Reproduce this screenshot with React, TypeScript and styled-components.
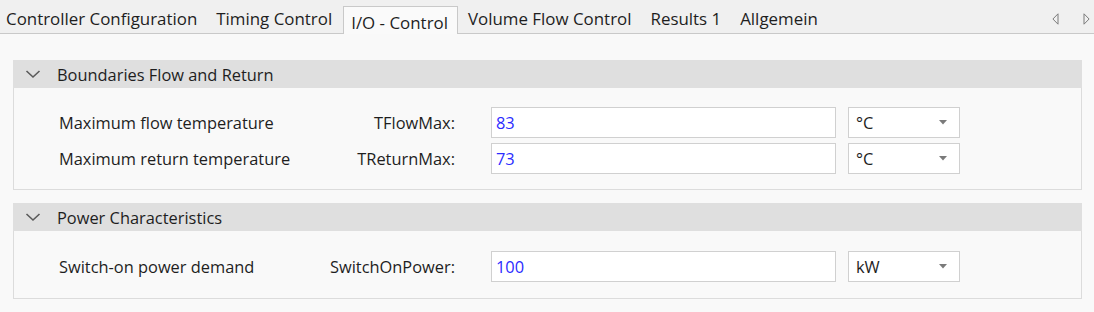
import React from "react";
import styled, { createGlobalStyle } from "styled-components";

const Global = createGlobalStyle`
  html, body { margin: 0; padding: 0; background: #f9f9f9; }
  body { font-family: "Open Sans", "Noto Sans", sans-serif; font-size: 16.4px; color: #1e1e1e; }
  * { box-sizing: border-box; }
`;

const Page = styled.div`
  width: 1094px;
  height: 312px;
  background: #f9f9f9;
  display: flex;
  flex-direction: column;
  overflow: hidden;
`;

const TabStrip = styled.div`
  height: 34px;
  background: #f0f0f0;
  border-bottom: 1px solid #c9c9c9;
  display: flex;
  align-items: flex-end;
`;

const Tab = styled.div<{ $active?: boolean }>`
  height: ${(p) => (p.$active ? "28px" : "33px")};
  padding: ${(p) => (p.$active ? "3px 9px 0 7px" : "4px 9px 0 10px")};
  margin-left: ${(p) => (p.$active ? "2px" : "0")};
  display: flex;
  align-items: center;
  white-space: nowrap;
  font-size: 16.9px;
  color: #1e1e1e;
  margin-bottom: ${(p) => (p.$active ? "-1px" : "0")};
  background: ${(p) => (p.$active ? "#fafafa" : "transparent")};
  border: ${(p) => (p.$active ? "1px solid #c9c9c9" : "none")};
  border-bottom: none;
  &:first-child { padding-left: 6px; }
`;

const Scrollers = styled.div`
  margin-left: auto;
  height: 33px;
  display: flex;
  align-items: center;
  gap: 24px;
  padding: 4px 4px 0 0;
`;

const Content = styled.div`
  padding: 26px 12px 0 13px;
  display: flex;
  flex-direction: column;
  gap: 13px;
`;

const Group = styled.section`
  border: 1px solid #dcdcdc;
  background: #f9f9f9;
`;

const GroupHeader = styled.div`
  height: 28px;
  margin: -1px -1px 0 -1px;
  background: #dfdfdf;
  display: flex;
  align-items: center;
  padding-left: 12px;
  gap: 16px;
  color: #1e1e1e;
`;

const GroupBody = styled.div<{ $top: number; $bottom: number }>`
  padding: ${(p) => p.$top}px 121px ${(p) => p.$bottom}px 45px;
  display: flex;
  flex-direction: column;
  gap: 5px;
`;

const Row = styled.div`
  display: flex;
  align-items: center;
  height: 31px;
`;

const Label = styled.div`
  flex: 1;
  white-space: nowrap;
`;

const Keyword = styled.div`
  white-space: nowrap;
  text-align: right;
`;

const ValueBox = styled.div`
  margin-left: 36px;
  width: 345px;
  height: 31px;
  background: #ffffff;
  border: 1px solid #d0d0d0;
  display: flex;
  align-items: center;
  padding-left: 4px;
  color: #2b2bff;
`;

const UnitSelect = styled.div`
  margin-left: 12px;
  width: 112px;
  height: 31px;
  background: #ffffff;
  border: 1px solid #d0d0d0;
  display: flex;
  align-items: center;
  padding: 0 12px 0 7px;
  justify-content: space-between;
  color: #1e1e1e;
`;

const Chevron = () => (
  <svg width="16" height="10" viewBox="0 0 16 10">
    <path d="M1.5 2 L8 8 L14.5 2" fill="none" stroke="#5a5a5a" strokeWidth="1.6" />
  </svg>
);

const DropArrow = () => (
  <svg width="8" height="5" viewBox="0 0 8 5">
    <path d="M0 0 L8 0 L4 4.5 Z" fill="#7a7a7a" />
  </svg>
);

const ScrollArrow = ({ dir }: { dir: "left" | "right" }) => (
  <svg width="7" height="12" viewBox="0 0 7 12">
    {dir === "left" ? (
      <path d="M6 0.8 L6 11.2 L0.9 6 Z" fill="none" stroke="#7a7a7a" strokeWidth="1" />
    ) : (
      <path d="M1 0.8 L1 11.2 L6.1 6 Z" fill="none" stroke="#7a7a7a" strokeWidth="1" />
    )}
  </svg>
);

type Field = { label: string; key: string; value: string; unit: string };

const groups: { title: string; fields: Field[]; top: number; bottom: number }[] = [
  {
    title: "Boundaries Flow and Return",
    top: 19,
    bottom: 15,
    fields: [
      { label: "Maximum flow temperature", key: "TFlowMax:", value: "83", unit: "°C" },
      { label: "Maximum return temperature", key: "TReturnMax:", value: "73", unit: "°C" },
    ],
  },
  {
    title: "Power Characteristics",
    top: 20,
    bottom: 16,
    fields: [
      { label: "Switch-on power demand", key: "SwitchOnPower:", value: "100", unit: "kW" },
    ],
  },
];

const tabs = [
  "Controller Configuration",
  "Timing Control",
  "I/O - Control",
  "Volume Flow Control",
  "Results 1",
  "Allgemein",
];

export default function App() {
  return (
    <Page>
      <Global />
      <TabStrip>
        {tabs.map((t) => (
          <Tab key={t} $active={t === "I/O - Control"}>
            {t}
          </Tab>
        ))}
        <Scrollers>
          <ScrollArrow dir="left" />
          <ScrollArrow dir="right" />
        </Scrollers>
      </TabStrip>
      <Content>
        {groups.map((g) => (
          <Group key={g.title}>
            <GroupHeader>
              <Chevron />
              <span>{g.title}</span>
            </GroupHeader>
            <GroupBody $top={g.top} $bottom={g.bottom}>
              {g.fields.map((f) => (
                <Row key={f.key}>
                  <Label>{f.label}</Label>
                  <Keyword>{f.key}</Keyword>
                  <ValueBox>{f.value}</ValueBox>
                  <UnitSelect>
                    <span>{f.unit}</span>
                    <DropArrow />
                  </UnitSelect>
                </Row>
              ))}
            </GroupBody>
          </Group>
        ))}
      </Content>
    </Page>
  );
}
